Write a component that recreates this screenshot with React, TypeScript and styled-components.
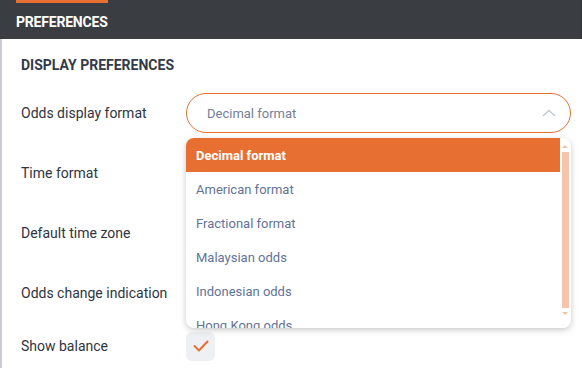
import React from 'react';
import styled, { createGlobalStyle } from 'styled-components';

const GlobalStyle = createGlobalStyle`
  html, body {
    margin: 0;
    padding: 0;
    background: #fff;
    font-family: Roboto, "Liberation Sans", sans-serif;
  }
`;

const ORANGE = '#e86f32';

const oddsFormats = [
  'Decimal format',
  'American format',
  'Fractional format',
  'Malaysian odds',
  'Indonesian odds',
  'Hong Kong odds',
];

export default function App() {
  return (
    <>
      <GlobalStyle />
      <PageCss>
        <HeaderCss>
          <TabCss>PREFERENCES</TabCss>
        </HeaderCss>
        <ContentCss>
          <SectionTitleCss>DISPLAY PREFERENCES</SectionTitleCss>
          <FormCss>
            <LabelCss>Odds display format</LabelCss>
            <FieldCss>
              <SelectCss>
                <span>Decimal format</span>
                <svg width="14" height="8" viewBox="0 0 14 8">
                  <path d="M1 7 L7 1.5 L13 7" fill="none" stroke="#c3c8d2" strokeWidth="1.4" />
                </svg>
              </SelectCss>
              <DropdownCss>
                <OptionListCss>
                  {oddsFormats.map((f, i) => (
                    <OptionCss key={f} $selected={i === 0}>
                      {f}
                    </OptionCss>
                  ))}
                </OptionListCss>
                <ScrollbarCss>
                  <ArrowCss $up />
                  <ThumbCss />
                  <ArrowCss />
                </ScrollbarCss>
              </DropdownCss>
            </FieldCss>

            <LabelCss>Time format</LabelCss>
            <FieldCss />

            <LabelCss>Default time zone</LabelCss>
            <FieldCss />

            <LabelCss>Odds change indication</LabelCss>
            <FieldCss />

            <LabelCss $short>Show balance</LabelCss>
            <FieldCss $short>
              <CheckboxCss>
                <svg width="16" height="12" viewBox="0 0 16 12">
                  <path d="M1.5 6 L6 10.5 L14.5 1.5" fill="none" stroke={ORANGE} strokeWidth="2" strokeLinecap="round" strokeLinejoin="round" />
                </svg>
              </CheckboxCss>
            </FieldCss>
          </FormCss>
        </ContentCss>
      </PageCss>
    </>
  );
}

const PageCss = styled.div`
  width: 582px;
  height: 368px;
  overflow: hidden;
  display: flex;
  flex-direction: column;
`;

const HeaderCss = styled.div`
  height: 39px;
  background: #3a3d42;
  padding-left: 16px;
  display: flex;
  flex-shrink: 0;
  border-right: 1px solid #2e3135;
`;

const TabCss = styled.div`
  width: 92px;
  border-top: 3px solid ${ORANGE};
  box-sizing: border-box;
  color: #fff;
  font-weight: 700;
  font-size: 14px;
  letter-spacing: -0.2px;
  padding-top: 11px;
  white-space: nowrap;
`;

const ContentCss = styled.div`
  flex: 1;
  border-left: 2px solid #c9ccd1;
  padding: 16px 0 0 19px;
`;

const SectionTitleCss = styled.div`
  font-size: 14px;
  font-weight: 700;
  color: #333a48;
  line-height: 20px;
  margin-bottom: 8px;
`;

const FormCss = styled.div`
  display: grid;
  grid-template-columns: 165px 385px;
`;

const LabelCss = styled.div<{ $short?: boolean }>`
  height: ${p => (p.$short ? 46 : 60)}px;
  display: flex;
  align-items: center;
  font-size: 14px;
  color: #2f3441;
  padding-bottom: 1px;
  box-sizing: border-box;
`;

const FieldCss = styled.div<{ $short?: boolean }>`
  position: relative;
  height: ${p => (p.$short ? 46 : 60)}px;
  display: flex;
  align-items: center;
`;

const SelectCss = styled.div`
  width: 100%;
  height: 40px;
  box-sizing: border-box;
  border: 1px solid ${ORANGE};
  border-radius: 20px;
  display: flex;
  align-items: center;
  justify-content: space-between;
  padding: 0 14px 0 20px;
  font-size: 13px;
  color: #75809a;
`;

const DropdownCss = styled.div`
  position: absolute;
  top: 55px;
  left: 0;
  right: 0;
  height: 190px;
  background: #fff;
  border-radius: 8px;
  box-shadow: 0 2px 6px rgba(0, 0, 0, 0.22);
  overflow: hidden;
  display: flex;
  z-index: 2;
`;

const OptionListCss = styled.div`
  flex: 1;
  overflow: hidden;
`;

const OptionCss = styled.div<{ $selected?: boolean }>`
  height: 34px;
  display: flex;
  align-items: center;
  padding-left: 10px;
  font-size: 13px;
  font-weight: ${p => (p.$selected ? 700 : 400)};
  color: ${p => (p.$selected ? '#fff' : '#62739a')};
  background: ${p => (p.$selected ? ORANGE : 'transparent')};
`;

const ScrollbarCss = styled.div`
  width: 11px;
  display: flex;
  flex-direction: column;
  align-items: center;
  padding: 3px 2px 4px 1px;
  box-sizing: border-box;
`;

const ArrowCss = styled.div<{ $up?: boolean }>`
  width: 0;
  height: 0;
  margin: 4px 0;
  border-left: 3px solid transparent;
  border-right: 3px solid transparent;
  ${p =>
    p.$up
      ? `border-bottom: 3px solid #f3c1a6;`
      : `border-top: 3px solid #f3c1a6;`}
`;

const ThumbCss = styled.div`
  width: 7px;
  height: 156px;
  background: #f5c4aa;
`;

const CheckboxCss = styled.div`
  width: 29px;
  height: 29px;
  border-radius: 6px;
  background: #eef0f3;
  display: flex;
  align-items: center;
  justify-content: center;
`;
